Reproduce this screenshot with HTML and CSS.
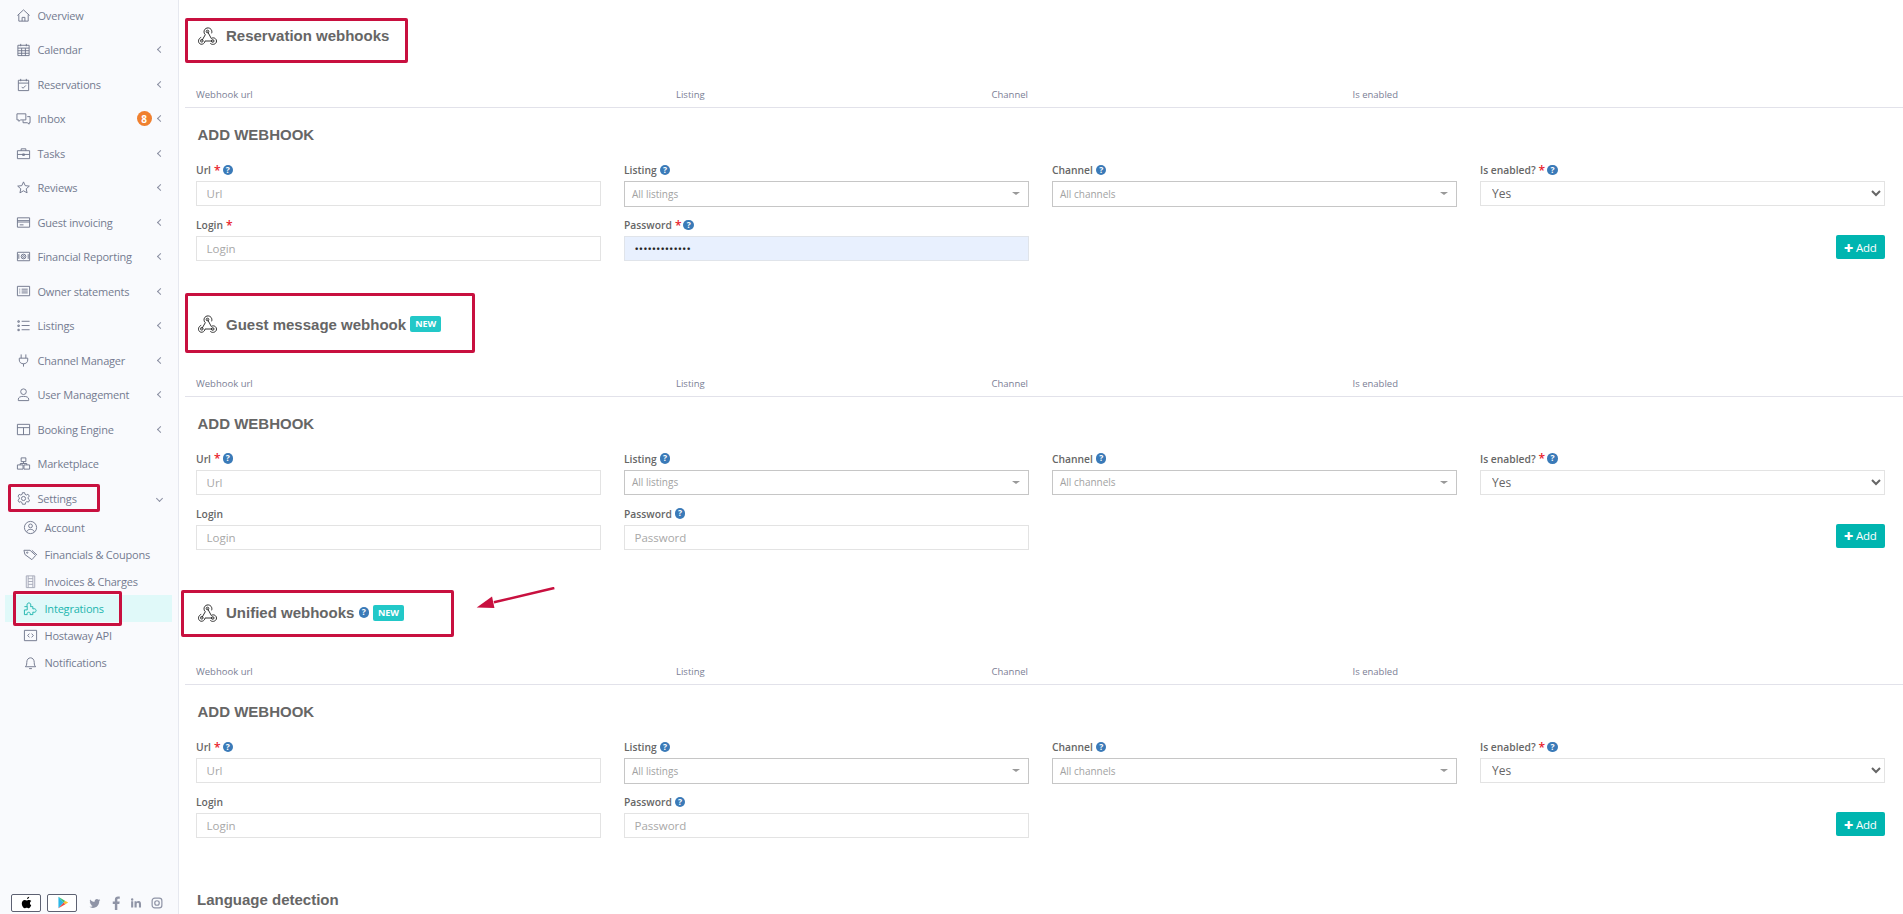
FILE: index.html
```html
<!DOCTYPE html>
<html lang="en">
<head>
<meta charset="utf-8">
<title>Integrations</title>
<link rel="stylesheet" href="styles.css">
</head>
<body>
<svg class="sprite" width="0" height="0">
  <defs>
    <symbol id="hook" viewBox="0 0 19 18"><g fill="none" stroke="currentColor" stroke-width="1"><circle cx="9.500" cy="4.500" r="1.300"/><circle cx="3.800" cy="13.800" r="1.300"/><circle cx="14.700" cy="14" r="1.300"/><path d="M3.800 13.800L7.300 7.700C5.300 6 5.500 2 9 1c3.500-.7 5.700 2.500 4.600 5.300M9.500 4.500l3.800 7c2-1.500 5-.3 5.200 2.500.1 3-3.800 4.500-6.200 2.400M14.700 14H7c-.2 3-3.800 4.200-5.600 2.400C-.3 14.600.5 11.300 3.200 10.300"/></g></symbol>
  </defs>
</svg>
<div class="app">
  <aside class="sidebar">
    <nav class="menu">
      <a class="item"><svg class="ico" viewBox="0 0 16 16"><path d="M1.500 8L8 2l6.500 6M3 7v7h10V7M6.500 14v-4h3v4"/></svg><span class="lbl">Overview</span></a>
      <a class="item"><svg class="ico" viewBox="0 0 16 16"><path d="M2 3.500h12v11H2zM2 6.500h12M2 9.300h12M2 12h12M6 6.500v8M10 6.500v8M5 2v2.500M11 2v2.500"/></svg><span class="lbl">Calendar</span><i class="chev"></i></a>
      <a class="item"><svg class="ico" viewBox="0 0 16 16"><path d="M2.500 3.500h11v11h-11zM2.500 6.500h11M5 2v2.500M11 2v2.500M6 10.500l1.500 1.500 3-3"/></svg><span class="lbl">Reservations</span><i class="chev"></i></a>
      <a class="item"><svg class="ico" viewBox="0 0 16 16"><path d="M1 3h9.500v6.500H5L3 11V9.500H1zM12 6h3v6.500h-1V14l-2-1.500H7.500V10"/></svg><span class="lbl">Inbox</span><b class="count">8</b><i class="chev"></i></a>
      <a class="item"><svg class="ico" viewBox="0 0 16 16"><path d="M1.500 5h13v8.500h-13zM5.500 5V3h5v2M1.500 9h13M7 8.500h2v1.500H7z"/></svg><span class="lbl">Tasks</span><i class="chev"></i></a>
      <a class="item"><svg class="ico" viewBox="0 0 16 16"><path d="M8 2l1.800 4 4.400.5-3.300 2.900.9 4.300L8 11.500l-3.800 2.200.9-4.300-3.300-2.900L6.200 6z"/></svg><span class="lbl">Reviews</span><i class="chev"></i></a>
      <a class="item"><svg class="ico" viewBox="0 0 16 16"><path d="M1.500 3h13v10h-13zM1.500 6h13M1.500 7.500h13M4 10.500h4"/></svg><span class="lbl">Guest invoicing</span><i class="chev"></i></a>
      <a class="item"><svg class="ico" viewBox="0 0 16 16"><path d="M1.500 3.500h13v9h-13zM3 5.500v5M13 5.500v5"/><circle cx="8" cy="8" r="2.500"/><circle cx="8" cy="8" r="1"/></svg><span class="lbl">Financial Reporting</span><i class="chev"></i></a>
      <a class="item"><svg class="ico" viewBox="0 0 16 16"><path d="M1.500 2.500h13v10h-13zM3.500 5.500h1M6 5.500h6.500M3.500 7.500h1M6 7.500h6.500M3.500 9.500h1M6 9.500h6.500"/></svg><span class="lbl">Owner statements</span><i class="chev"></i></a>
      <a class="item"><svg class="ico" viewBox="0 0 16 16"><path d="M6 3.500h8.500M6 8h8.500M6 12.500h8.500M2 3h1.500v1.500H2zM2 7.500h1.500V9H2zM2 12h1.500v1.500H2z"/></svg><span class="lbl">Listings</span><i class="chev"></i></a>
      <a class="item"><svg class="ico" viewBox="0 0 16 16"><path d="M5.500 1.500v4M10.500 1.500v4M3.500 5.500h9v2c0 2.500-2 4-4.500 4s-4.500-1.500-4.500-4zM8 11.500v3"/></svg><span class="lbl">Channel Manager</span><i class="chev"></i></a>
      <a class="item"><svg class="ico" viewBox="0 0 16 16"><circle cx="8" cy="5" r="3"/><path d="M2.500 14.500V13c0-2 2-3 5.500-3s5.500 1 5.500 3v1.500z"/></svg><span class="lbl">User Management</span><i class="chev"></i></a>
      <a class="item"><svg class="ico" viewBox="0 0 16 16"><path d="M1.500 2.500h13v11h-13zM1.500 6h13M8 6v7.500"/></svg><span class="lbl">Booking Engine</span><i class="chev"></i></a>
      <a class="item"><svg class="ico" viewBox="0 0 16 16"><path d="M5.500 2h5v4h-5zM1.500 9.500h6v4.500h-6zM8.500 9.500h6v4.500h-6zM8 6v2M4.500 9.500V8h7v1.500"/></svg><span class="lbl">Marketplace</span></a>
      <a class="item"><svg class="ico" viewBox="0 0 16 16"><circle cx="8" cy="8" r="2.200"/><path d="M6.800 1.800h2.400l.4 1.800 1.500.7 1.600-.9 1.500 2-1.200 1.400.1 1.700 1.400 1.100-1.200 2.200-1.800-.5-1.300 1-.3 1.800H6.800l-.4-1.800-1.400-.9-1.700.6-1.200-2.200 1.400-1.200V7l-1.400-1.300 1.300-2.100 1.700.7 1.500-.8z"/></svg><span class="lbl">Settings</span><i class="chev down"></i></a>
    </nav>
    <nav class="submenu">
      <a class="sub"><svg class="ico" viewBox="0 0 16 16"><circle cx="8" cy="8" r="6.500"/><circle cx="8" cy="6.300" r="2"/><path d="M4 12.500c.6-1.800 2-2.500 4-2.500s3.400.7 4 2.500"/></svg><span class="lbl">Account</span></a>
      <a class="sub"><svg class="ico" viewBox="0 0 16 16"><path d="M1 3.500h6.500l6 5.500-4 4.500L2 8zM9.500 3.500l5.500 5"/><circle cx="4.500" cy="6" r=".7"/></svg><span class="lbl">Financials &amp; Coupons</span></a>
      <a class="sub"><svg class="ico light" viewBox="0 0 16 16"><path d="M3.500 2h9v12.500h-9zM5.500 2v12.500M10.500 2v12.500M5.500 5h5M5.500 8h5M5.500 11h5"/></svg><span class="lbl">Invoices &amp; Charges</span></a>
      <a class="sub active"><svg class="ico" viewBox="0 0 16 16"><path d="M1.500 6h3c-.8-2.500.3-4 1.800-4s2.700 1.500 1.700 4h2.500v2.500c2-.8 3.500.2 3.500 1.700s-1.500 2.400-3.500 1.600v2.700H7.500c.6-1.800-.3-2.500-1.500-2.500s-2 .8-1.500 2.500h-3V9.500h3V6"/></svg><span class="lbl">Integrations</span></a>
      <a class="sub"><svg class="ico" viewBox="0 0 16 16"><path d="M1.500 2.500h13v11h-13zM6.800 6L5 8l1.800 2M9.200 6L11 8l-1.800 2"/></svg><span class="lbl">Hostaway API</span></a>
      <a class="sub"><svg class="ico" viewBox="0 0 16 16"><path d="M2.500 12.500c1.200-1 1.500-2 1.500-4.500 0-3 1.700-5 4-5s4 2 4 5c0 2.500.3 3.500 1.500 4.500zM6.500 14.500h3"/></svg><span class="lbl">Notifications</span></a>
    </nav>
    <footer class="side-foot">
      <span class="store"><svg class="store-ico" viewBox="0 0 16 16"><path fill="#000" d="M11.300 1c.1 1.200-1 2.800-2.700 2.800-.1-1.300 1.200-2.700 2.700-2.800zM13.800 11.400c-.6 1.500-1.900 3.600-3.100 3.600-1 0-1.300-.6-2.500-.6s-1.600.6-2.500.6C4 15 2.200 11.900 2.200 9.300c0-2.500 1.600-4.500 3.700-4.500 1 0 1.800.7 2.400.7s1.500-.8 2.800-.7c.6 0 2 .3 2.800 1.500-2.300 1.400-1.900 4.500-.1 5.100z"/></svg></span>
      <span class="store"><svg class="store-ico" viewBox="0 0 16 16"><path fill="#2bb7e8" d="M3 1v14L9.500 8z"/><path fill="#3fbf6a" d="M3 1l8.500 5-2 2z"/><path fill="#f0483e" d="M3 15l8.500-5-2-2z"/><path fill="#fbc02d" d="M11.500 6l3.500 2-3.500 2-2-2z"/></svg></span>
      <span class="socials">
        <svg class="soc" viewBox="0 0 16 16"><path d="M15 4c-.5.3-1 .4-1.700.5.600-.4 1-.9 1.300-1.600-.6.300-1.200.6-1.900.7C12.100 3 11.300 2.700 10.500 2.700c-1.700 0-3 1.400-3 3 0 .2 0 .5.100.7C5.100 6.300 2.900 5.100 1.500 3.200c-.8 1.400-.3 3.100 1 4-.5 0-1-.1-1.400-.4 0 1.500 1 2.700 2.400 3-.4.100-.9.100-1.300 0 .4 1.200 1.500 2 2.800 2.100-1.300 1-2.900 1.400-4.500 1.200 1.300.9 2.900 1.400 4.600 1.400 5.600 0 8.700-4.700 8.500-8.900.6-.4 1-.9 1.400-1.600z"/></svg>
        <svg class="soc fb" viewBox="0 0 16 16"><path d="M9.500 16V9h2.300l.4-2.800H9.500V4.500c0-.8.300-1.300 1.400-1.300h1.400V.7C12 .7 11.200.6 10.300.6 8.200.6 6.700 1.900 6.700 4.200v2H4.300V9h2.400v7z"/></svg>
        <svg class="soc" viewBox="0 0 16 16"><path d="M1.500 5.500h2.800V14H1.500zM2.900 1.700a1.600 1.600 0 110 3.200 1.600 1.600 0 010-3.200zM6 5.500h2.700v1.200c.5-.8 1.400-1.400 2.700-1.400 2.800 0 3.300 1.800 3.300 4.200V14h-2.800V10c0-1 0-2.300-1.400-2.300s-1.600 1.100-1.600 2.200V14H6z"/></svg>
        <svg class="soc line" viewBox="0 0 16 16"><rect x="1.500" y="1.500" width="13" height="13" rx="3.500"/><circle cx="8" cy="8" r="3"/><path d="M11.800 4.200h.1"/></svg>
      </span>
    </footer>
  </aside>

  <main class="main">
    <section class="section">
      <h2 class="title"><svg class="hook"><use href="#hook"/></svg>Reservation webhooks</h2>
      <div class="thead"><span>Webhook url</span><span>Listing</span><span>Channel</span><span>Is enabled</span></div>
      <h3 class="add-title">ADD WEBHOOK</h3>
      <form class="form">
        <div class="field"><label class="label">Url <em>*</em> <i class="help">?</i></label><input class="input" placeholder="Url"></div>
        <div class="field"><label class="label">Listing <i class="help">?</i></label><div class="fake-select"><span>All listings</span><i class="caret"></i></div></div>
        <div class="field"><label class="label">Channel <i class="help">?</i></label><div class="fake-select"><span>All channels</span><i class="caret"></i></div></div>
        <div class="field"><label class="label">Is enabled? <em>*</em> <i class="help">?</i></label><select class="input native"><option>Yes</option></select></div>
        <div class="field"><label class="label">Login <em>*</em></label><input class="input" placeholder="Login"></div>
        <div class="field"><label class="label">Password <em>*</em> <i class="help">?</i></label><input class="input filled" type="password" value="abcdefghijklm"></div>
        <div class="field"></div>
        <div class="field end"><button type="button" class="btn"><span class="plus">✚</span> Add</button></div>
      </form>
    </section>

    <section class="section">
      <h2 class="title"><svg class="hook"><use href="#hook"/></svg>Guest message webhook <span class="new">NEW</span></h2>
      <div class="thead"><span>Webhook url</span><span>Listing</span><span>Channel</span><span>Is enabled</span></div>
      <h3 class="add-title">ADD WEBHOOK</h3>
      <form class="form">
        <div class="field"><label class="label">Url <em>*</em> <i class="help">?</i></label><input class="input" placeholder="Url"></div>
        <div class="field"><label class="label">Listing <i class="help">?</i></label><div class="fake-select"><span>All listings</span><i class="caret"></i></div></div>
        <div class="field"><label class="label">Channel <i class="help">?</i></label><div class="fake-select"><span>All channels</span><i class="caret"></i></div></div>
        <div class="field"><label class="label">Is enabled? <em>*</em> <i class="help">?</i></label><select class="input native"><option>Yes</option></select></div>
        <div class="field"><label class="label">Login</label><input class="input" placeholder="Login"></div>
        <div class="field"><label class="label">Password <i class="help">?</i></label><input class="input" placeholder="Password"></div>
        <div class="field"></div>
        <div class="field end"><button type="button" class="btn"><span class="plus">✚</span> Add</button></div>
      </form>
    </section>

    <section class="section">
      <h2 class="title"><svg class="hook"><use href="#hook"/></svg>Unified webhooks <i class="help big">?</i> <span class="new">NEW</span></h2>
      <div class="thead"><span>Webhook url</span><span>Listing</span><span>Channel</span><span>Is enabled</span></div>
      <h3 class="add-title">ADD WEBHOOK</h3>
      <form class="form">
        <div class="field"><label class="label">Url <em>*</em> <i class="help">?</i></label><input class="input" placeholder="Url"></div>
        <div class="field"><label class="label">Listing <i class="help">?</i></label><div class="fake-select"><span>All listings</span><i class="caret"></i></div></div>
        <div class="field"><label class="label">Channel <i class="help">?</i></label><div class="fake-select"><span>All channels</span><i class="caret"></i></div></div>
        <div class="field"><label class="label">Is enabled? <em>*</em> <i class="help">?</i></label><select class="input native"><option>Yes</option></select></div>
        <div class="field"><label class="label">Login</label><input class="input" placeholder="Login"></div>
        <div class="field"><label class="label">Password <i class="help">?</i></label><input class="input" placeholder="Password"></div>
        <div class="field"></div>
        <div class="field end"><button type="button" class="btn"><span class="plus">✚</span> Add</button></div>
      </form>
    </section>

    <h2 class="lang">Language detection</h2>
  </main>

  <div class="mark mark-settings"></div>
  <div class="mark mark-integrations"></div>
  <div class="mark mark-res"></div>
  <div class="mark mark-guest"></div>
  <div class="mark mark-unified"></div>
  <svg class="arrow" viewBox="0 0 82 24"><path d="M81 1L18 16" stroke="#c8103f" stroke-width="2.600" fill="none"/><path d="M0 21.500L16 10l2.500 12z" fill="#c8103f"/></svg>
</div>
</body>
</html>
```
FILE: styles.css
```css
* { box-sizing: border-box; }
html, body { margin: 0; height: 914px; overflow: hidden; background: #fff; }
body { font-family: "Open Sans", "Liberation Sans", sans-serif; color: #6a6a6a; }
.sprite { position: absolute; }
.app { position: relative; display: flex; width: 1903px; height: 914px; overflow: hidden; }

.sidebar { width: 179px; flex: none; display: flex; flex-direction: column; background: #f9fafd; border-right: 1px solid #e6e8ef; }
.menu { display: flex; flex-direction: column; margin-top: -2px; }
.item { display: flex; align-items: center; height: 34.500px; padding-left: 16px; font-size: 11px; letter-spacing: -.2px; color: #747a90; }
.ico { width: 15px; height: 15px; flex: none; fill: none; stroke: #70768c; stroke-width: 1; margin-right: 6.500px; }
.ico.light { stroke: #a4a8b8; }
.lbl { flex: 1; white-space: nowrap; }
.chev { width: 5px; height: 5px; border-left: 1px solid #8a8fa2; border-bottom: 1px solid #8a8fa2; transform: rotate(45deg); margin-right: 15.500px; flex: none; }
.chev.down { transform: rotate(-45deg); margin-right: 16.500px; }
.count { width: 15px; height: 15px; border-radius: 50%; background: #f0802f; color: #fff; font-size: 10px; font-weight: 700; letter-spacing: 0; display: flex; align-items: center; justify-content: center; margin-right: 6px; flex: none; }
.submenu { display: flex; flex-direction: column; margin-top: -1.700px; padding: 0 6px 0 5px; }
.sub { display: flex; align-items: center; height: 27px; padding-left: 18px; font-size: 11px; letter-spacing: -.2px; color: #747a90; }
.sub.active { background: #e0f9f9; color: #20b5ae; }
.sub.active .ico { stroke: #20b5ae; }
.side-foot { margin-top: auto; display: flex; align-items: center; padding: 0 0 3px 11px; height: 20px; }
.store { width: 30px; height: 18px; border: 1px solid #5d6172; border-radius: 2px; background: #fff; display: flex; align-items: center; justify-content: center; margin-right: 6px; }
.store-ico { width: 13px; height: 13px; }
.socials { display: flex; align-items: center; gap: 8.700px; margin-left: 6px; }
.soc { width: 12px; height: 12px; fill: #8f94a6; }
.soc.fb { width: 14px; height: 14px; margin: 0 -1px; }
.soc.line { fill: none; stroke: #8f94a6; stroke-width: 1.600; }

.main { flex: 1; min-width: 0; display: flex; flex-direction: column; padding: 20px 0 0 6px; }
.section { height: 288.500px; }
.title { display: flex; align-items: center; height: 31px; margin: 0; padding-left: 13px; font: 700 15px "Liberation Sans", Arial, sans-serif; color: #666; white-space: pre; }
.hook { width: 19px; height: 18px; color: #333; margin-right: 9px; flex: none; }
.new { background: #22c8c8; color: #fff; font: 700 9px "Open Sans", sans-serif; padding: 0 5px; height: 16px; line-height: 16px; border-radius: 2px; }
.help.big + .new { margin-left: 4px; }
.thead { display: grid; grid-template-columns: 480px 315.500px 361px 1fr; align-items: center; height: 26px; margin-top: 31px; padding: 0 0 0 11px; font-size: 9.500px; color: #7b8095; border-bottom: 1px solid #e2e2ea; }
.add-title { margin: 17px 0 0; padding-left: 12.500px; height: 20px; font: 700 15px/20px "Liberation Sans", Arial, sans-serif; color: #666; }
.form { display: grid; grid-template-columns: repeat(4, 405px); column-gap: 23px; row-gap: 10.500px; margin-top: 17px; padding-left: 11px; }
.field { display: flex; flex-direction: column; }
.field.end { padding-top: 18px; align-items: flex-end; }
.label { display: flex; align-items: center; gap: 3px; height: 16px; margin-bottom: 3px; font-size: 10.300px; font-weight: 600; color: #666; }
.label em { font-style: normal; color: #e8202a; font-size: 12px; margin-right: -1px; }
.help { display: inline-flex; align-items: center; justify-content: center; width: 10.500px; height: 10.500px; border-radius: 50%; background: #3a7ab8; color: #fff; font: 700 8.500px/1 "Open Sans", sans-serif; font-style: normal; }
.input { width: 405px; height: 25px; border: 1px solid #e3e3e3; background: #fff; padding: 0 9.500px; font: 11.500px "Open Sans", sans-serif; color: #666; outline: none; border-radius: 0; }
.input::placeholder { color: #a8a8a8; }
.input.filled { background: #e8f0fe; color: #222; border-color: #e0e4ea; }
.native { padding-left: 7px; font-size: 12px; }
.fake-select { width: 405px; height: 25.500px; border: 1px solid #c6c6c6; background: #fff; display: flex; align-items: center; justify-content: space-between; padding: 0 8px 0 7px; font-size: 10px; color: #a2a2a2; }
.caret { width: 0; height: 0; border-left: 4px solid transparent; border-right: 4px solid transparent; border-top: 3px solid #999; }
.btn { width: 49px; height: 24px; padding: 0; border: 0; border-radius: 2px; background: #00b5b0; color: #fff; font: 11.500px "Open Sans", sans-serif; letter-spacing: -.2px; }
.plus { font-size: 11px; }
.lang { margin: 4.500px 0 0 12px; height: 20px; font: 700 15px/20px "Liberation Sans", Arial, sans-serif; color: #666; }

.mark { position: absolute; border: 3px solid #c8103f; border-radius: 2px; pointer-events: none; }
.mark-settings { left: 8px; top: 484px; width: 92px; height: 28px; }
.mark-integrations { left: 13px; top: 591px; width: 109px; height: 35px; }
.mark-res { left: 185px; top: 18px; width: 223px; height: 45px; }
.mark-guest { left: 185px; top: 293px; width: 290px; height: 60px; }
.mark-unified { left: 181px; top: 590px; width: 273px; height: 47px; }
.arrow { position: absolute; left: 476px; top: 587px; width: 80px; height: 23px; }
```
